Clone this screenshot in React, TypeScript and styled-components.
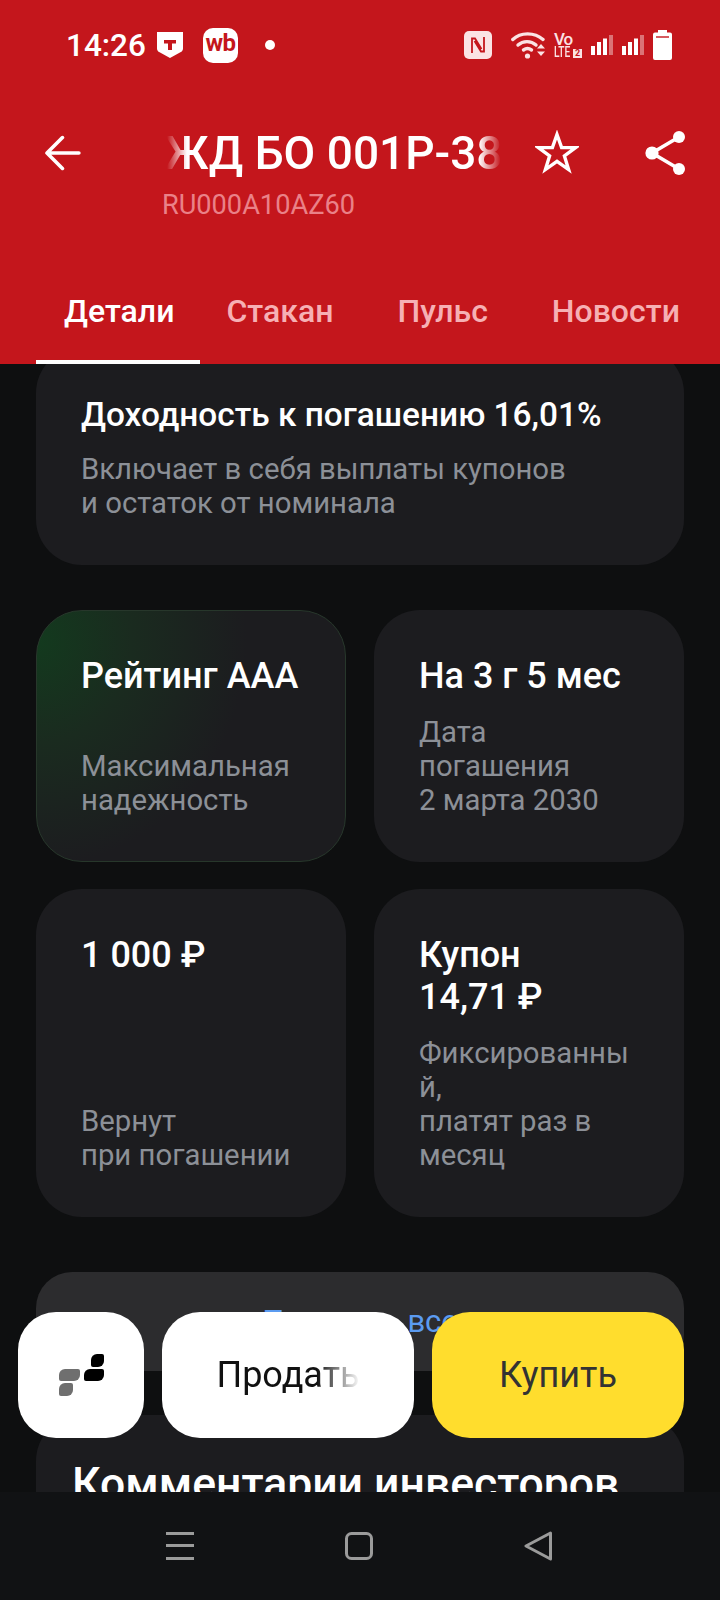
import styled, { createGlobalStyle } from 'styled-components';

const GlobalStyle = createGlobalStyle`
  html, body {
    margin: 0;
    padding: 0;
    background: #0e0f10;
  }
  * {
    box-sizing: border-box;
  }
`;

const ArrowIcon = () => (
  <svg width="36" height="36" viewBox="0 0 36 36" fill="none" stroke="#fff" strokeWidth="3.6" strokeLinecap="round" strokeLinejoin="round">
    <path d="M34 18H2.5M17.5 2.5 2 18l15.5 15.5" />
  </svg>
);

const StarIcon = () => (
  <svg width="44" height="44" viewBox="0 0 44 44" fill="none" stroke="#fff" strokeWidth="3.4" strokeLinejoin="miter">
    <path d="M22 4.5 26.6 17.6H40.6L29.4 26 33.6 39.6 22 31.4 10.4 39.6 14.6 26 3.4 17.6H17.4Z" />
  </svg>
);

const ShareIcon = () => (
  <svg width="42" height="46" viewBox="0 0 42 46" fill="#fff" stroke="#fff" strokeWidth="3.6">
    <path d="M34 7 7 23l27 16" fill="none" />
    <circle cx="34" cy="7" r="6" strokeWidth="0" />
    <circle cx="7" cy="23" r="6.6" strokeWidth="0" />
    <circle cx="34" cy="39" r="6" strokeWidth="0" />
  </svg>
);

const ShieldIcon = () => (
  <svg width="26" height="26" viewBox="0 0 26 26">
    <path d="M0 0h26v16.5c0 2-1 3-2.600 3.800L13 26 2.600 20.300C1 19.500 0 18.500 0 16.500Z" fill="#fff" />
    <path d="M7 8h12v3.500h-4V18h-4v-6.500H7Z" fill="#c4161c" />
  </svg>
);

const NfcIcon = () => (
  <svg width="28" height="28" viewBox="0 0 28 28">
    <rect width="28" height="28" rx="5" fill="#fbe3e4" />
    <path d="M8 22V7.500h3l6.500 10.500M20 6v14.500h-3L10.500 10" fill="none" stroke="#c4161c" strokeWidth="1.800" />
  </svg>
);

const WifiIcon = () => (
  <svg width="34" height="28" viewBox="0 0 34 28" fill="none" stroke="#fbe3e4" strokeWidth="3.400" strokeLinecap="round">
    <path d="M1.800 8.500C9.500 1 23.500 1 32 8.500" />
    <path d="M7 14c5-4.500 13-4.500 18 0" />
    <path d="M12.500 19c2.500-1.800 5.500-1.800 8 0" />
    <circle cx="16.500" cy="25" r="2.600" fill="#fbe3e4" stroke="none" />
    <path d="M26 17.500h8l-4-4.500ZM26 20.500h8l-4 4.500Z" fill="#fbe3e4" stroke="none" />
  </svg>
);

const SignalIcon = () => (
  <svg width="22" height="20" viewBox="0 0 22 20">
    <rect x="0" y="11" width="4" height="9" fill="#fff" />
    <rect x="6" y="7" width="4" height="13" fill="#fff" />
    <rect x="12" y="3.500" width="4" height="16.500" fill="#fff" />
    <rect x="18" y="0" width="4" height="20" fill="#fff" opacity="0.4" />
  </svg>
);

const BatteryIcon = () => (
  <svg width="19" height="30" viewBox="0 0 19 30">
    <path d="M5 0h9v2.500h3a2 2 0 0 1 2 2V28a2 2 0 0 1-2 2H2a2 2 0 0 1-2-2V4.500a2 2 0 0 1 2-2h3Z" fill="#fff" />
    <rect x="3" y="6" width="13" height="2" fill="#c4161c" opacity="0.7" />
  </svg>
);

const LogoIcon = () => (
  <svg width="45" height="42" viewBox="0 0 45 42">
    <path d="M6 15h13a2 2 0 0 1 2 2v4a6 6 0 0 1-6 6H2a2 2 0 0 1-2-2v-4a6 6 0 0 1 6-6Z" fill="#6f6f6f" />
    <path d="M6 29h6a2 2 0 0 1 2 2v5a6 6 0 0 1-6 6H2a2 2 0 0 1-2-2v-5a6 6 0 0 1 6-6Z" fill="#6f6f6f" />
    <path d="M31 15h12a2 2 0 0 1 2 2v4a6 6 0 0 1-6 6H27a2 2 0 0 1-2-2v-4a6 6 0 0 1 6-6Z" fill="#000" />
    <path d="M38 0h5a2 2 0 0 1 2 2v5a6 6 0 0 1-6 6h-5a2 2 0 0 1-2-2V6a6 6 0 0 1 6-6Z" fill="#000" />
  </svg>
);

const MenuIcon = () => (
  <svg width="28" height="28" viewBox="0 0 28 28" fill="#9b9b9b">
    <rect y="0" width="28" height="3" />
    <rect y="12" width="28" height="3" />
    <rect y="25" width="28" height="3" />
  </svg>
);

const HomeIcon = () => (
  <svg width="28" height="28" viewBox="0 0 28 28" fill="none" stroke="#9b9b9b" strokeWidth="3">
    <rect x="1.500" y="1.500" width="25" height="25" rx="5" />
  </svg>
);

const BackIcon = () => (
  <svg width="28" height="30" viewBox="0 0 28 30" fill="none" stroke="#9b9b9b" strokeWidth="3" strokeLinejoin="round">
    <path d="M26.500 2 2 15l24.500 13Z" />
  </svg>
);

const App = () => {
  return (
    <Page>
      <GlobalStyle />
      <Header>
        <StatusBar>
          <StatusGroup>
            <Clock>14:26</Clock>
            <ShieldSlot>
              <ShieldIcon />
            </ShieldSlot>
            <WbBadge>wb</WbBadge>
            <Dot />
          </StatusGroup>
          <StatusRight>
            <NfcIcon />
            <WifiIcon />
            <VoLte>
              <VoLine>Vo</VoLine>
              <LteLine>
                <LteText>LTE</LteText>
                <SimBadge>2</SimBadge>
              </LteLine>
            </VoLte>
            <SignalIcon />
            <SignalIcon />
            <BatteryIcon />
          </StatusRight>
        </StatusBar>
        <Toolbar>
          <ArrowIcon />
          <TitleBlock>
            <TitleClip>
              <Title>РЖД БО 001Р-38</Title>
            </TitleClip>
            <Code>RU000A10AZ60</Code>
          </TitleBlock>
          <ToolIcons>
            <StarIcon />
            <ShareIcon />
          </ToolIcons>
        </Toolbar>
        <Tabs>
          <Tab $active>Детали</Tab>
          <Tab>Стакан</Tab>
          <Tab>Пульс</Tab>
          <Tab>Новости</Tab>
        </Tabs>
      </Header>

      <Content>
        <Scroller>
          <WideCard>
            <WideTitle>Доходность к погашению 16,01%</WideTitle>
            <CardText>
              Включает в себя выплаты купонов
              <br />и остаток от номинала
            </CardText>
          </WideCard>

          <Grid>
            <Card $highlight>
              <CardTitle>Рейтинг ААА</CardTitle>
              <CardText>Максимальная надежность</CardText>
            </Card>
            <Card>
              <CardTitle>На 3 г 5 мес</CardTitle>
              <CardText>
                Дата погашения
                <br />2 марта 2030
              </CardText>
            </Card>
            <Card>
              <CardTitle>1 000 ₽</CardTitle>
              <CardText>
                Вернут
                <br />
                при погашении
              </CardText>
            </Card>
            <Card>
              <CardTitle>
                Купон
                <br />
                14,71 ₽
              </CardTitle>
              <CardText>
                Фиксированный,
                <br />
                платят раз в месяц
              </CardText>
            </Card>
          </Grid>

          <LinkCard>Показать все</LinkCard>

          <CommentsCard>
            <CommentsTitle>Комментарии инвесторов</CommentsTitle>
          </CommentsCard>
        </Scroller>

        <Actions>
          <LogoButton>
            <LogoIcon />
          </LogoButton>
          <SellButton>
            <FadeLabel>Продать</FadeLabel>
          </SellButton>
          <BuyButton>Купить</BuyButton>
        </Actions>
      </Content>

      <NavBar>
        <MenuIcon />
        <HomeIcon />
        <BackIcon />
      </NavBar>
    </Page>
  );
};

const Page = styled.div`
  width: 720px;
  height: 1600px;
  display: flex;
  flex-direction: column;
  overflow: hidden;
  background: #0e0f10;
  font-family: Roboto, 'Liberation Sans', sans-serif;
`;
const Header = styled.header`
  height: 364px;
  flex: none;
  display: flex;
  flex-direction: column;
  background: #c4161c;
  color: #fff;
`;
const StatusBar = styled.div`
  height: 90px;
  padding: 0 48px 0 66px;
  display: flex;
  justify-content: space-between;
  align-items: center;
`;
const StatusGroup = styled.div`
  display: flex;
  align-items: center;
`;
const StatusRight = styled.div`
  display: flex;
  align-items: center;
  gap: 9px;
  & > svg:first-child {
    margin-right: 10px;
  }
`;
const Clock = styled.span`
  font-size: 31.5px;
  font-weight: 500;
  width: 91px;
`;
const ShieldSlot = styled.span`
  display: flex;
  width: 46px;
`;
const WbBadge = styled.span`
  width: 35px;
  height: 35px;
  border-radius: 10px;
  background: #fff;
  color: #c4161c;
  font-size: 24px;
  font-weight: 700;
  line-height: 31px;
  text-align: center;
  letter-spacing: -0.5px;
`;
const Dot = styled.span`
  width: 10px;
  height: 10px;
  margin-left: 27px;
  border-radius: 50%;
  background: #fff;
`;
const VoLte = styled.span`
  display: flex;
  flex-direction: column;
  width: 28px;
  font-weight: 500;
  color: #fbe3e4;
  white-space: nowrap;
`;
const VoLine = styled.span`
  font-size: 17px;
  line-height: 14px;
  letter-spacing: -1px;
`;
const LteLine = styled.span`
  display: flex;
  align-items: flex-end;
`;
const LteText = styled.span`
  display: inline-block;
  width: 19px;
  font-size: 15px;
  line-height: 13px;
  transform: scaleX(0.68);
  transform-origin: left center;
`;
const SimBadge = styled.span`
  width: 9px;
  height: 9px;
  margin-bottom: 1px;
  background: #fbe3e4;
  color: #c4161c;
  font-size: 9px;
  font-weight: 700;
  line-height: 9px;
  text-align: center;
`;
const Toolbar = styled.div`
  height: 150px;
  padding: 0 33px 0 45px;
  display: flex;
  align-items: flex-start;
  & > svg {
    margin-top: 45px;
  }
`;
const TitleBlock = styled.div`
  width: 342px;
  margin-left: 82px;
  padding-top: 38px;
`;
const TitleClip = styled.div`
  overflow: hidden;
  white-space: nowrap;
  mask-image: linear-gradient(90deg, transparent 0, transparent 4px, #000 24px, #000 316px, transparent 338px);
`;
const Title = styled.div`
  margin-left: -27px;
  font-size: 46px;
  font-weight: 500;
  line-height: 50px;
`;
const Code = styled.div`
  margin-top: 12px;
  margin-left: -1px;
  font-size: 27.2px;
  line-height: 30px;
  font-weight: 400;
  color: #ea8188;
`;
const ToolIcons = styled.div`
  display: flex;
  gap: 66px;
  margin-left: 31px;
  padding-top: 40px;
`;
const Tabs = styled.nav`
  flex: 1;
  padding-left: 36px;
  display: flex;
`;
const Tab = styled.div<{ $active?: boolean }>`
  padding: 22px 26px 0 28px;
  display: flex;
  align-items: center;
  font-size: 32px;
  font-weight: 500;
  color: ${(p) => (p.$active ? '#fff' : '#f6b0b4')};
  border-bottom: 4px solid ${(p) => (p.$active ? '#fff' : 'transparent')};
  &:nth-child(2) {
    margin-left: -2px;
  }
  &:nth-child(n + 3) {
    margin-left: 10px;
  }
`;
const Content = styled.main`
  position: relative;
  flex: 1;
  overflow: hidden;
`;
const Scroller = styled.div`
  margin-top: -17px;
  padding: 0 36px;
  display: flex;
  flex-direction: column;
`;
const Card = styled.section<{ $highlight?: boolean }>`
  padding: ${(p) => (p.$highlight ? '44px' : '45px')};
  display: flex;
  flex-direction: column;
  justify-content: space-between;
  gap: 18px;
  border-radius: 46px;
  overflow-wrap: anywhere;
  background: ${(p) =>
    p.$highlight
      ? 'radial-gradient(ellipse 68% 90% at 0 12%, #133a1e 0, #1a2b1f 45%, #1c1c1f 100%)'
      : '#1c1c1f'};
  border: ${(p) => (p.$highlight ? '1px solid #27372b' : 'none')};
`;
const WideCard = styled(Card)`
  margin-bottom: 45px;
  gap: 16px;
`;
const Grid = styled.div`
  display: grid;
  grid-template-columns: 310px 310px;
  gap: 27px 28px;
`;
const CardTitle = styled.div`
  font-size: 36px;
  font-weight: 500;
  line-height: 42px;
  color: #fff;
`;
const WideTitle = styled(CardTitle)`
  margin-top: 2px;
  font-size: 33.4px;
`;
const CardText = styled.div`
  font-size: 29.3px;
  line-height: 34px;
  color: #8c9097;
`;
const LinkCard = styled.div`
  height: 99px;
  margin-top: 55px;
  display: flex;
  justify-content: center;
  align-items: center;
  border-radius: 36px;
  background: #2c2c2e;
  color: #5b9bf0;
  font-size: 31px;
`;
const CommentsCard = styled.section`
  margin-top: 44px;
  padding: 45px 36px;
  border-radius: 46px;
  background: #1c1c1f;
`;
const CommentsTitle = styled.h2`
  margin: 0;
  font-size: 44.5px;
  font-weight: 500;
  line-height: 48px;
  white-space: nowrap;
  color: #fff;
`;
const Actions = styled.div`
  position: absolute;
  left: 18px;
  bottom: 54px;
  display: flex;
  gap: 18px;
`;
const ActionButton = styled.div`
  height: 126px;
  display: flex;
  justify-content: center;
  align-items: center;
  border-radius: 38px;
  font-size: 36px;
`;
const LogoButton = styled(ActionButton)`
  width: 126px;
  background: #fff;
`;
const SellButton = styled(ActionButton)`
  width: 252px;
  background: #fff;
`;
const BuyButton = styled(ActionButton)`
  width: 252px;
  background: #ffdd2d;
  color: #333;
`;
const FadeLabel = styled.span`
  color: #111;
  mask-image: linear-gradient(90deg, #000 70%, transparent 100%);
`;
const NavBar = styled.nav`
  height: 108px;
  flex: none;
  padding: 0 168px 0 166px;
  display: flex;
  justify-content: space-between;
  align-items: center;
  background: #111214;
`;

export default App;
